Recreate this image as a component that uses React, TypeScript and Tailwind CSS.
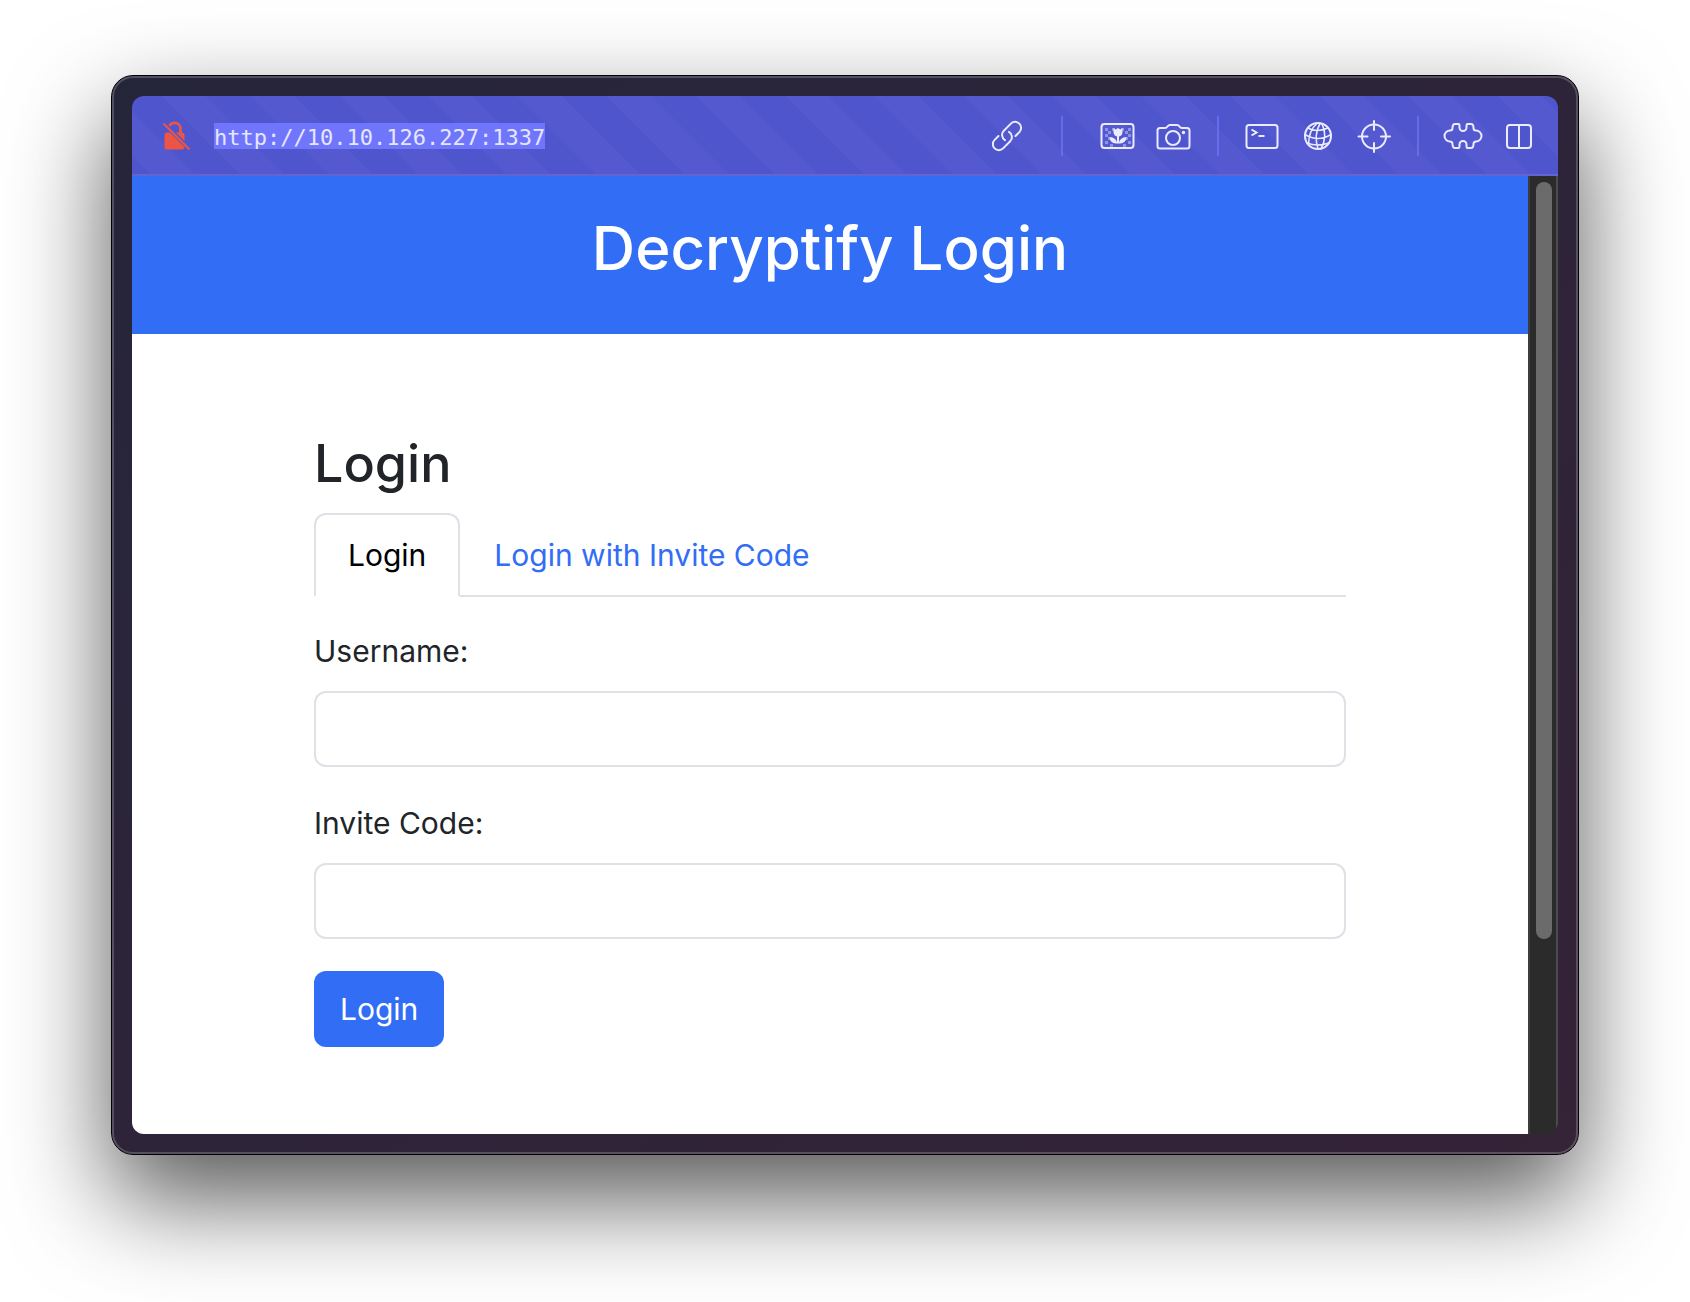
import type { ReactNode } from "react";

function ToolButton({ label, children }: { label: string; children: ReactNode }) {
  return (
    <button type="button" aria-label={label} className="size-10 shrink-0 text-[#ebebff]">
      <svg
        viewBox="0 0 40 40"
        className="size-10"
        fill="none"
        stroke="currentColor"
        strokeWidth="2"
        strokeLinecap="round"
        strokeLinejoin="round"
      >
        {children}
      </svg>
    </button>
  );
}

function Separator() {
  return <span className="h-10 w-0.5 shrink-0 bg-[#686cec]" />;
}

const CHECKS = [
  [7, 12], [14, 12], [23, 12], [30, 12],
  [10, 15], [27, 15],
  [7, 18], [30, 18],
  [10, 21], [27, 21],
  [7, 25], [30, 25], [12, 28], [25, 28],
];

function Toolbar() {
  return (
    <div className="flex items-center">
      <ToolButton label="Copy link">
        <g transform="rotate(-45 20 20)">
          <path d="M14 14H8.500a6 6 0 0 0 0 12h10a6 6 0 0 0 5.800-7.500" />
          <path d="M26 26h5.500a6 6 0 0 0 0-12h-10a6 6 0 0 0-5.800 7.500" />
        </g>
      </ToolButton>
      <div className="flex items-center gap-[23px] pl-[34px]">
        <Separator />
        <div className="flex gap-4 pl-3">
          <ToolButton label="Image">
            <rect x="3.500" y="8" width="32" height="24" rx="3" />
            <g fill="currentColor" stroke="none">
              {CHECKS.map(([x, y]) => (
                <rect key={`${x}-${y}`} x={x} y={y} width="3" height="3" opacity="0.4" />
              ))}
              <path d="M15.500 12l2.200 1.500 2.300-1.500 2.300 1.500 2.200-1.500v4.500q-.5 3.500-3.500 4v6q1-5 7.500-5.500-.5 6-6.500 6.500h-4q-6-.5-6.500-6.500 6.500 .5 7.500 5.500v-6q-3-.5-3.500-4z" />
            </g>
          </ToolButton>
          <ToolButton label="Screenshot">
            <path d="M6 12h5q1.500 0 2.500-1.500t2.500-1.500h7q1.500 0 2.500 1.500t2.500 1.500h5a2.500 2.500 0 0 1 2.500 2.500v15.500a2.500 2.500 0 0 1-2.500 2.500h-27a2.500 2.500 0 0 1-2.500-2.500V14.500a2.500 2.500 0 0 1 2.500-2.500z" />
            <circle cx="19" cy="22" r="7" />
            <circle cx="29.500" cy="16.500" r="1.700" fill="currentColor" stroke="none" />
          </ToolButton>
        </div>
        <Separator />
        <div className="flex gap-4">
          <ToolButton label="Console">
            <rect x="4.500" y="9" width="31" height="23" rx="2.500" />
            <path d="M9.500 13.500l5 3-5 3M16.500 20h6" strokeLinecap="butt" strokeLinejoin="miter" />
          </ToolButton>
          <ToolButton label="Network">
            <circle cx="20" cy="20" r="13" />
            <path
              d="M19 7.500Q11 14 10.500 28M22 7.500Q15.500 19 20 33M24 8q6 12-1 25M10 12q8 5 20 0M7 18.500q13 8 26 0M9 27q10 4 22 0"
              strokeWidth="1.600"
            />
          </ToolButton>
          <ToolButton label="Inspect element">
            <circle cx="20" cy="20.500" r="12" />
            <path d="M20 5v9M20 27v9M4.500 20.500h9M27 20.500h9" />
          </ToolButton>
        </div>
        <Separator />
        <div className="flex gap-4 pl-px">
          <ToolButton label="Extensions">
            <path d="M12 8h3.500q1 0 1 2v1.500a3.500 3.500 0 0 0 7 0V10q0-2 1-2H28q2.500 0 2.500 4 0 2.500 2.500 2.500a5.500 5.500 0 0 1 0 11q-2.500 0-2.500 2.500 0 4-2.500 4h-3.500q-1 0-1-2v-1.500a3.500 3.500 0 0 0-7 0V30q0 2-1 2H12q-2.500 0-2.500-4 0-2.500-2.500-2.500a5.500 5.500 0 0 1 0-11q2.500 0 2.500-2.500 0-4 2.500-4z" />
          </ToolButton>
          <ToolButton label="Split view">
            <rect x="8" y="9" width="24" height="23" rx="3" />
            <path d="M20 9v23" />
          </ToolButton>
        </div>
      </div>
    </div>
  );
}

function AddressBar() {
  return (
    <header className="flex h-20 items-center justify-between border-b-2 border-[#6264d2] bg-[repeating-linear-gradient(45deg,#4f55cd_0px,#4f55cd_13px,#5459cf_13px,#5459cf_44px,#4f55cd_44px,#4f55cd_63px)] pt-0.5 pr-[19px] pl-[26px]">
      <div className="flex items-center gap-5">
        <svg viewBox="0 0 36 36" className="size-9" fill="none" aria-label="Not secure" role="img">
          <path d="M11 8.500a6 6 0 0 1 11.500 3v5" stroke="#ec5545" strokeWidth="2.800" />
          <rect x="6.500" y="14.500" width="20" height="17" rx="2.500" fill="#ec5545" />
          <path d="M3 5.500l4.500-1.500 26.500 26.500-1 1.500-4-.5z" fill="#5156cd" />
          <path d="M5.500 5.500l26 26" stroke="#ec5545" strokeWidth="2.200" />
        </svg>
        <input
          type="text"
          aria-label="Address"
          defaultValue="http://10.10.126.227:1337"
          className="h-[26px] w-[25ch] bg-[#7076fb] pt-0.5 font-['DejaVu_Sans_Mono',monospace] text-[22px] leading-6 text-[#e6e6ff] outline-none"
        />
      </div>
      <Toolbar />
    </header>
  );
}

function Field({ id, label }: { id: string; label: string }) {
  return (
    <div className="mb-8">
      <label htmlFor={id} className="mb-4 block leading-[48px]">
        {label}
      </label>
      <input id={id} type="text" className="block h-[76px] w-full rounded-xl border-2 border-[#dee2e6] px-6 outline-none" />
    </div>
  );
}

function LoginPage() {
  return (
    <div className="min-w-0 flex-1 bg-white text-[30px] text-[#212529]">
      <div className="bg-[#316df5] pt-[33px] pb-[47px] text-center text-white">
        <h1 className="text-[60px] leading-[78px] font-medium">Decryptify Login</h1>
      </div>
      <main className="px-[182px] pt-24 pb-[87px]">
        <h2 className="mb-4 text-[52px] leading-[67px] font-medium">Login</h2>
        <nav className="flex border-b-2 border-[#dee2e6]">
          <a href="#login" className="-mb-0.5 rounded-t-xl border-2 border-[#dee2e6] border-b-white bg-white px-8 py-4 leading-[48px] text-black">
            Login
          </a>
          <a href="#invite" className="px-[34px] pt-[18px] pb-4 leading-[48px] text-[#316df5]">
            Login with Invite Code
          </a>
        </nav>
        <form className="mt-[30px]" onSubmit={(e) => e.preventDefault()}>
          <Field id="username" label="Username:" />
          <Field id="invite-code" label="Invite Code:" />
          <button type="submit" className="block h-[76px] rounded-xl bg-[#316df5] px-[26px] text-white">
            Login
          </button>
        </form>
      </main>
    </div>
  );
}

export default function App() {
  return (
    <div className="min-h-screen bg-white px-[111px] pt-[75px] pb-[146px] font-['Inter',sans-serif]">
      <div className="rounded-[22px] border border-black bg-linear-to-br from-[#25253a] to-[#352338] shadow-[0_44px_100px_rgba(0,0,0,0.66)]">
        <div className="rounded-[21px] border-2 border-white/20 p-[18px]">
          <div className="overflow-hidden rounded-xl">
            <AddressBar />
            <div className="flex">
              <LoginPage />
              <div className="w-[30px] shrink-0 border-x-2 border-l-[#3c3c3c] border-r-[#4c4c4c] bg-[#2b2b2b] py-1.5 pl-1.5">
                <div className="h-[80%] w-4 rounded-full bg-[#6b6b6b]" />
              </div>
            </div>
          </div>
        </div>
      </div>
    </div>
  );
}
